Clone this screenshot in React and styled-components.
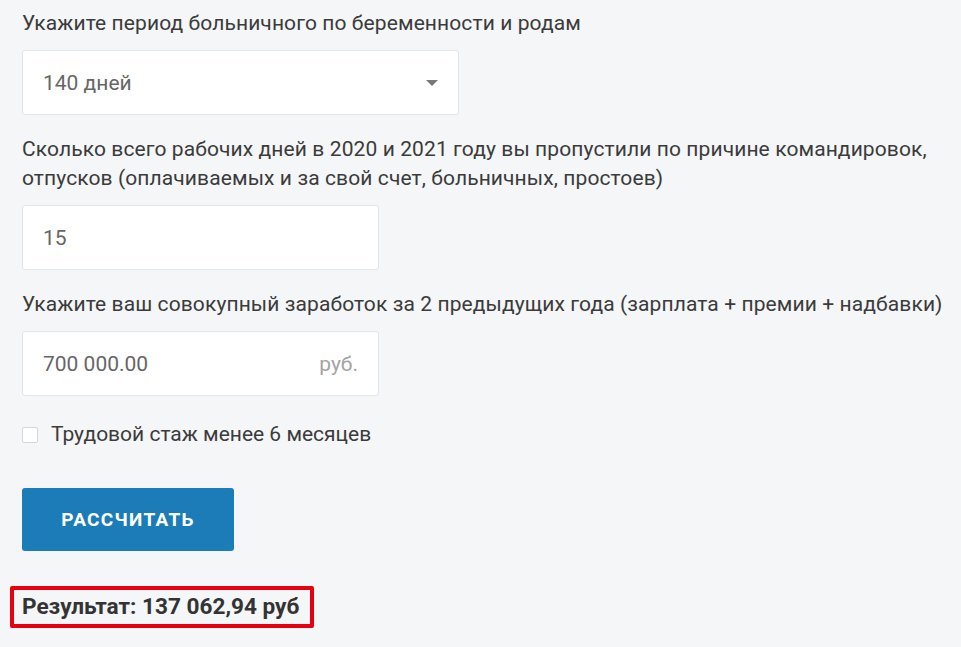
import React, { useState } from "react";
import styled, { createGlobalStyle } from "styled-components";

const GlobalStyle = createGlobalStyle`
  html, body {
    margin: 0;
    padding: 0;
    background: #f4f6f8;
  }
  body {
    font-family: Roboto, "Noto Sans", sans-serif;
    color: #3b3b3b;
  }
`;

const Form = styled.div`
  padding: 9px 0 0 22px;
  display: flex;
  flex-direction: column;
`;

const Field = styled.div`
  display: flex;
  flex-direction: column;
  margin-bottom: 20px;
`;

const Label = styled.div`
  font-size: 21px;
  line-height: 29px;
  letter-spacing: 0.1px;
  margin-bottom: 12px;
`;

const Box = styled.div`
  width: ${(p) => p.$width}px;
  height: 65px;
  box-sizing: border-box;
  background: #fff;
  border: 1px solid #e1e4e8;
  border-radius: 3px;
  display: flex;
  align-items: center;
  padding: 0 20px;
  font-size: 21px;
  color: #666;
`;

const Value = styled.span`
  flex: 1;
`;

const Unit = styled.span`
  color: #a4a4a4;
`;

const Arrow = styled.span`
  width: 0;
  height: 0;
  border-left: 6px solid transparent;
  border-right: 6px solid transparent;
  border-top: 6px solid #777;
`;

const CheckRow = styled.label`
  display: flex;
  align-items: center;
  gap: 13px;
  font-size: 21px;
  line-height: 29px;
  margin-top: 4px;
  cursor: pointer;
`;

const CheckBox = styled.span`
  width: 16px;
  height: 16px;
  box-sizing: border-box;
  border: 1px solid #d4d7db;
  border-radius: 2px;
  background: #fff;
`;

const Button = styled.button`
  margin-top: 39px;
  width: 212px;
  height: 63px;
  border: none;
  border-radius: 3px;
  background: #1b7cb8;
  color: #fff;
  font-family: Roboto, "Noto Sans", sans-serif;
  font-weight: 700;
  font-size: 19px;
  letter-spacing: 1.3px;
  align-self: flex-start;
  cursor: pointer;
`;

const Result = styled.div`
  margin: 35px 0 0 -12px;
  align-self: flex-start;
  border: 4px solid #e60010;
  border-radius: 2px;
  padding: 4px 11px 4px 8px;
  font-size: 22.6px;
  line-height: 26px;
  font-weight: 700;
  color: #333;
`;

export default function App() {
  const [checked, setChecked] = useState(false);
  return (
    <>
      <GlobalStyle />
      <Form>
        <Field>
          <Label>Укажите период больничного по беременности и родам</Label>
          <Box $width={437}>
            <Value>140 дней</Value>
            <Arrow />
          </Box>
        </Field>
        <Field>
          <Label>
            Сколько всего рабочих дней в 2020 и 2021 году вы пропустили по причине командировок,
            <br />
            отпусков (оплачиваемых и за свой счет, больничных, простоев)
          </Label>
          <Box $width={357}>
            <Value>15</Value>
          </Box>
        </Field>
        <Field>
          <Label>Укажите ваш совокупный заработок за 2 предыдущих года (зарплата + премии + надбавки)</Label>
          <Box $width={357}>
            <Value>700 000.00</Value>
            <Unit>руб.</Unit>
          </Box>
        </Field>
        <CheckRow onClick={() => setChecked(!checked)}>
          <CheckBox />
          Трудовой стаж менее 6 месяцев
        </CheckRow>
        <Button>РАССЧИТАТЬ</Button>
        <Result>Результат: 137 062,94 руб</Result>
      </Form>
    </>
  );
}
